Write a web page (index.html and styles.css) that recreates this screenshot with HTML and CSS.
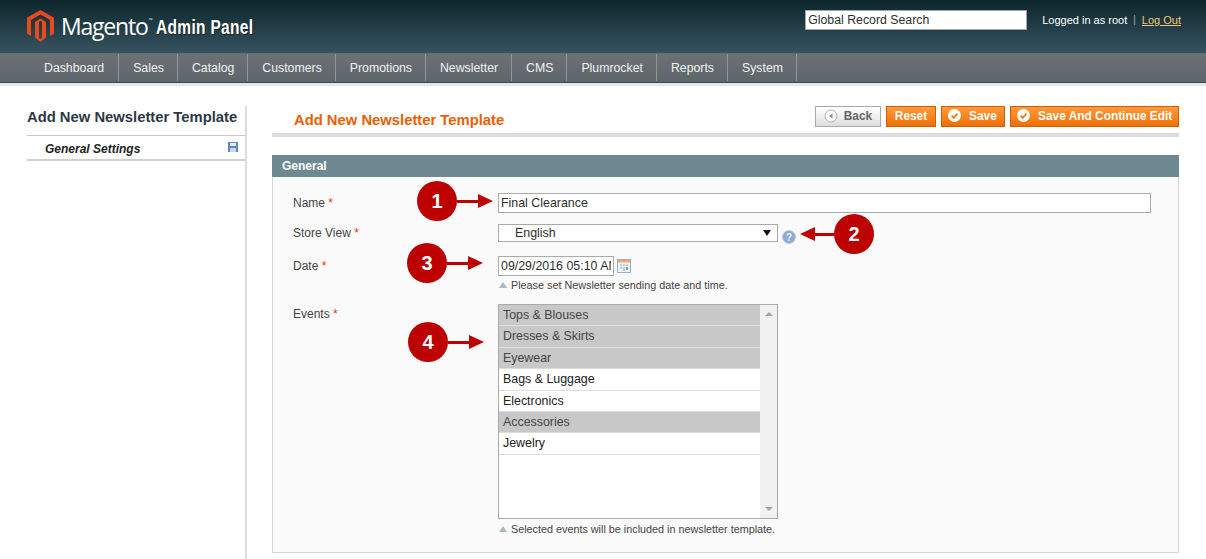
FILE: index.html
```html
<!DOCTYPE html>
<html lang="en">
<head>
<meta charset="utf-8">
<title>Add New Newsletter Template</title>
<link rel="stylesheet" href="styles.css">
</head>
<body>
<header class="top">
  <div class="brand">
    <svg class="logo-mark" width="27" height="32" viewBox="0 0 27 32"><path fill="#e8491d" d="M13.5 0 27 7.8v16L23 26V10L13.5 4.4 4 10v16L0 23.8v-16z"/><path fill="#e8491d" d="M13.5 8.6 19 11.8V27.6L13.5 32 8 27.6V11.8zM12 12v16l1.5 1 1.5-1V12l-1.5-1z"/></svg>
    <span class="brand-name">Magento<sup class="tm">™</sup></span>
    <span class="brand-sub">Admin Panel</span>
  </div>
  <div class="top-right">
    <input class="global-search" type="text" value="Global Record Search">
    <span class="login">Logged in as root</span>
    <span class="pipe">|</span>
    <a class="logout" href="#">Log Out</a>
  </div>
</header>
<nav class="nav">
  <a class="nav-item" href="#">Dashboard</a>
  <a class="nav-item" href="#">Sales</a>
  <a class="nav-item" href="#">Catalog</a>
  <a class="nav-item" href="#">Customers</a>
  <a class="nav-item" href="#">Promotions</a>
  <a class="nav-item" href="#">Newsletter</a>
  <a class="nav-item" href="#">CMS</a>
  <a class="nav-item" href="#">Plumrocket</a>
  <a class="nav-item" href="#">Reports</a>
  <a class="nav-item" href="#">System</a>
</nav>
<div class="page">
  <aside class="side">
    <h3 class="side-title">Add New Newsletter Template</h3>
    <div class="side-item">
      <span>General Settings</span>
      <svg width="10" height="10" viewBox="0 0 10 10"><rect width="10" height="10" fill="#5b86c9"/><rect x="2" y="1" width="6" height="3" fill="#e6edf7"/><rect x="2" y="6" width="6" height="4" fill="#cfd9e6"/></svg>
    </div>
  </aside>
  <main class="main">
    <div class="head">
      <h3 class="head-title">Add New Newsletter Template</h3>
      <div class="actions">
        <button class="btn btn-back"><svg width="14" height="14" viewBox="0 0 14 14"><circle cx="7" cy="7" r="6" fill="#fafafa" stroke="#b5b5b5"/><path d="M8.5 4.5v5L5 7z" fill="#888"/></svg><span>Back</span></button>
        <button class="btn btn-go">Reset</button>
        <button class="btn btn-go btn-icon"><svg width="13" height="13" viewBox="0 0 13 13"><circle cx="6.5" cy="6.5" r="6.5" fill="#fff"/><path d="M3.6 6.6l2.2 2.2 3.6-4.2" fill="none" stroke="#ef7a16" stroke-width="1.9"/></svg><span>Save</span></button>
        <button class="btn btn-go btn-icon"><svg width="13" height="13" viewBox="0 0 13 13"><circle cx="6.5" cy="6.5" r="6.5" fill="#fff"/><path d="M3.6 6.6l2.2 2.2 3.6-4.2" fill="none" stroke="#ef7a16" stroke-width="1.9"/></svg><span>Save And Continue Edit</span></button>
      </div>
    </div>
    <section class="section">
      <h4 class="section-title">General</h4>
      <form class="fieldset">
        <div class="row row-name">
          <label class="label">Name <em>*</em></label>
          <input class="field field-wide" type="text" value="Final Clearance">
        </div>
        <div class="row row-store">
          <label class="label">Store View <em>*</em></label>
          <div class="select"><span>English</span><i class="caret"></i></div>
          <svg class="help" width="14" height="14" viewBox="0 0 14 14"><circle cx="7" cy="7" r="6.5" fill="#8fabd0" stroke="#b9cbe0"/><text x="7" y="10.5" text-anchor="middle" class="help-q">?</text></svg>
        </div>
        <div class="row row-date">
          <label class="label">Date <em>*</em></label>
          <div class="value">
            <div class="date-line">
              <input class="field field-date" type="text" value="09/29/2016 05:10 AM">
              <svg width="14" height="14" viewBox="0 0 14 14"><rect x=".5" y=".5" width="13" height="13" fill="#eef3fa" stroke="#8eafd6"/><rect x="1" y="1" width="12" height="2.5" fill="#f3ab68"/><path d="M3 5h2v2H3zM6 5h2v2H6zM9 5h2v2H9zM3 8h2v2H3zM6 8h2v2H6z" fill="#bcd0e6"/><path d="M9 8h2v3H9zM6 10.500h2v1H6z" fill="#77b872"/></svg>
            </div>
            <p class="note">Please set Newsletter sending date and time.</p>
          </div>
        </div>
        <div class="row row-events">
          <label class="label">Events <em>*</em></label>
          <div class="value">
            <div class="listbox">
              <ul class="options">
                <li class="opt sel">Tops &amp; Blouses</li>
                <li class="opt sel">Dresses &amp; Skirts</li>
                <li class="opt sel">Eyewear</li>
                <li class="opt">Bags &amp; Luggage</li>
                <li class="opt">Electronics</li>
                <li class="opt sel">Accessories</li>
                <li class="opt">Jewelry</li>
              </ul>
              <div class="scroll"><i class="up"></i><i class="down"></i></div>
            </div>
            <p class="note note-list">Selected events will be included in newsletter template.</p>
          </div>
        </div>
      </form>
    </section>
  </main>
</div>
<div class="callout c1"><b class="num">1</b><i class="shaft"></i><i class="head-r"></i></div>
<div class="callout c2"><i class="head-l"></i><i class="shaft"></i><b class="num">2</b></div>
<div class="callout c3"><b class="num">3</b><i class="shaft"></i><i class="head-r"></i></div>
<div class="callout c4"><b class="num">4</b><i class="shaft"></i><i class="head-r"></i></div>
</body>
</html>
```
FILE: styles.css
```css
* { box-sizing: border-box; }
html, body { margin: 0; height: 559px; overflow: hidden; }
body { position: relative; background: #fff; font-family: "Liberation Sans", Arial, sans-serif; font-size: 12px; color: #2f2f2f; }
h3, h4, p, ul { margin: 0; padding: 0; }

.top { height: 54px; background: linear-gradient(#0e262d, #35535f); display: flex; justify-content: space-between; padding: 10px 25px 0 27px; border-bottom: 1px solid #56707b; }
.brand { display: flex; align-items: flex-start; color: #fff; }
.logo-mark { flex: none; }
.brand-name { font-family: "Open Sans", sans-serif; font-size: 23px; line-height: 32px; margin-left: 7px; letter-spacing: -1.2px; }
.tm { font-size: 5px; vertical-align: 13px; line-height: 0; letter-spacing: 0; margin-left: 1px; }
.brand-sub { font-weight: 700; font-size: 19.5px; line-height: 34px; margin-left: 4px; letter-spacing: .4px; white-space: nowrap; transform: scaleX(.795); transform-origin: left center; text-shadow: 1px 1px 1px rgba(0, 0, 0, .5); }
.top-right { display: flex; align-items: flex-start; color: #fff; font-size: 11px; }
.global-search { width: 222px; height: 20px; border: 1px solid #a6a6a6; background: #fff; padding: 0 2px; font: 12.3px "Liberation Sans", sans-serif; color: #2f2f2f; margin-right: 15px; }
.login, .pipe, .logout { line-height: 20px; }
.pipe { margin: 0 6px; color: #9eb0b8; font-size: 10px; }
.logout { color: #f3c777; text-decoration: underline; }

.nav { height: 29px; background: linear-gradient(#6b7277, #5f666a); padding-left: 30px; display: flex; border-bottom: 1px solid #3d4a4f; }
.nav-item { padding: 0 13px 0 14px; line-height: 28px; height: 27px; color: #f0f0f0; text-decoration: none; font-size: 12.3px; border-right: 1px solid #8f979b; }
.nav-item:first-child { padding-right: 14px; }

.page { display: flex; border-top: 3px solid #e6e6e6; padding-left: 27px; height: 476px; }
.side { width: 220px; flex: none; margin-top: 20px; border-right: 2px solid #dcdcdc; }
.side-title { font-size: 14.8px; line-height: 21px; height: 30px; padding-top: 1px; color: #2d3846; border-bottom: 1px solid #c9c9c9; font-weight: 700; white-space: nowrap; }
.side-item { height: 25px; display: flex; justify-content: space-between; align-items: flex-start; padding: 6px 7px 0 18px; font-size: 12px; font-weight: 700; font-style: italic; color: #222; border-bottom: 2px solid #d0d0d0; }

.main { width: 907px; margin-left: 25px; flex: none; }
.head { height: 31px; margin-top: 20px; display: flex; justify-content: space-between; padding-left: 22px; border-bottom: 4px solid #ddd; }
.head-title { font-size: 14.8px; font-weight: 700; color: #eb5e00; padding-top: 4px; line-height: 20px; }
.actions { display: flex; gap: 5px; height: 21px; }
.btn { height: 21px; padding: 0 0 2px; border: 1px solid #cf5e00; background: linear-gradient(#ff9a3c, #ee6f05); color: #fff; font: 700 11.9px "Liberation Sans", sans-serif; display: flex; align-items: center; justify-content: center; }
.btn-back { width: 66px; border-color: #aaa; background: linear-gradient(#fff, #ddd); color: #666; gap: 6px; }
.btn-go { width: 50px; }
.btn-icon { width: 64px; gap: 8px; justify-content: flex-start; padding-left: 6px; }
.btn-icon:last-child { width: 169px; }

.section { margin-top: 18px; }
.section-title { height: 22px; background: #6f8992; color: #fff; font-size: 12px; line-height: 22px; padding-left: 10px; }
.fieldset { height: 376px; background: #fafafa; border: 1px solid #d6d6d6; border-top: 0; padding-left: 20px; }
.row { display: flex; align-items: flex-start; }
.label { width: 205px; flex: none; color: #444; line-height: 20px; }
.label em { color: #eb340a; font-style: normal; }
.field { height: 20px; border: 1px solid #aaa; background: #fff; font: 12.4px "Liberation Sans", sans-serif; color: #2f2f2f; padding: 0 2px; }
.row-name { padding-top: 16px; }
.field-wide { width: 653px; }
.row-store { padding-top: 11px; }
.row-store .label { line-height: 19px; }
.select { width: 280px; height: 18px; border: 1px solid #aaa; background: #fff; display: flex; justify-content: space-between; align-items: center; padding: 0 6px 0 16px; font-size: 12.4px; }
.caret { width: 0; height: 0; border: 4px solid transparent; border-top: 6px solid #111; border-bottom: 0; }
.help { margin: 6px 0 0 4px; }
.help-q { font: 700 10px "Liberation Sans", sans-serif; fill: #eef4fb; }
.row-date { padding-top: 12px; }
.date-line { display: flex; gap: 3px; align-items: center; }
.field-date { width: 116px; overflow: hidden; }
.note { font-size: 10.8px; color: #444; padding-left: 13px; line-height: 16px; margin-top: 1px; position: relative; }
.note-list { margin-top: 2px; }
.note::before { content: ""; position: absolute; left: 1px; top: 5px; width: 0; height: 0; border: 4px solid transparent; border-bottom: 6px solid #a9bac1; border-top: 0; }
.row-events { padding-top: 11px; }
.listbox { width: 280px; height: 215px; border: 1px solid #aaa; background: #fff; display: flex; }
.options { flex: 1; list-style: none; }
.opt { height: 21.4px; line-height: 20px; padding-left: 4px; border-bottom: 1px solid #ddd; font-size: 12.4px; color: #222; }
.opt.sel { background: #c8c8c8; color: #444; }
.scroll { width: 17px; background: #f1f1f1; display: flex; flex-direction: column; justify-content: space-between; align-items: center; padding: 7px 0; }
.up { border: 4px solid transparent; border-bottom: 4px solid #a6a6a6; border-top: 0; }
.down { border: 4px solid transparent; border-top: 4px solid #a6a6a6; border-bottom: 0; }

.callout { position: absolute; display: flex; align-items: center; }
.num { width: 40px; height: 40px; border-radius: 50%; background: #bd0000; color: #fff; font: 700 20px/40px "Liberation Sans", sans-serif; text-align: center; flex: none; }
.shaft { width: 21px; height: 3px; background: #bd0000; }
.head-r { width: 0; height: 0; border-left: 15px solid #bd0000; border-top: 7px solid transparent; border-bottom: 7px solid transparent; }
.head-l { width: 0; height: 0; border-right: 15px solid #bd0000; border-top: 7px solid transparent; border-bottom: 7px solid transparent; }
.c1 { left: 417px; top: 181px; }
.c2 { left: 800px; top: 214px; }
.c2 .shaft { width: 19px; }
.c3 { left: 407px; top: 243px; }
.c4 { left: 408px; top: 322px; }
```
